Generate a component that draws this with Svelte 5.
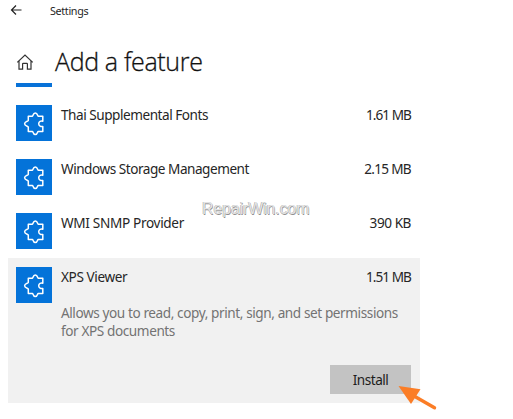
<script>
  const features = [
    { name: 'Thai Supplemental Fonts', size: '1.61 MB', nameSpacing: -0.47, sizeSpacing: -0.95 },
    { name: 'Windows Storage Management', size: '2.15 MB', nameSpacing: -0.48, sizeSpacing: -0.7 },
    { name: 'WMI SNMP Provider', size: '390 KB', nameSpacing: -0.33, sizeSpacing: -0.45 },
    { name: 'XPS Viewer', size: '1.51 MB', nameSpacing: -0.4, sizeSpacing: -0.95, selected: true },
  ];
</script>

<div class="window">
  <header class="titlebar">
    <svg class="back" width="12" height="12" viewBox="0 0 12 12"><path d="M11.5 6H1.5M6 1.5 1.5 6l4.5 4.5" /></svg>
    <span class="title">Settings</span>
  </header>
  <div class="heading">
    <svg class="home" width="18" height="18" viewBox="0 0 18 18"><path d="M1.3 9.4 9 2l7.7 7.4M3 8v8.2h3.6V11Q6.6 10.4 7.2 10.4H10.8Q11.4 10.4 11.4 11V16.2H15V8" /></svg>
    <h1>Add a feature</h1>
  </div>
  <div class="tab"></div>
  <ul>
    {#each features as f}
      <li class:selected={f.selected}>
        <div class="row">
          <div class="tile">
            <svg width="36" height="36" viewBox="0 0 36 36"><path d="M12.3 11.2H16.4C17.2 11.2 16.8 8 19.3 8S21.4 11.2 22.2 11.2H26.8V16.2C25 15.6 22.7 16.5 22.7 18.8S25 22 26.8 21.4V26.4H22.2C21.4 26.4 21.8 29.6 19.3 29.6S17.2 26.4 16.4 26.4H12.3V22.1C12.3 21.2 8.6 21.3 8.6 18.8S12.3 16.4 12.3 15.5Z" /></svg>
          </div>
          <span class="name" style:letter-spacing="{f.nameSpacing}px">{f.name}</span>
          <span class="size" style:letter-spacing="{f.sizeSpacing}px">{f.size}</span>
        </div>
        {#if f.selected}
          <p>Allows you to read, copy, print, sign, and set permissions<br />for XPS documents</p>
          <button>Install</button>
        {/if}
      </li>
    {/each}
  </ul>
  <div class="watermark">RepairWin.com</div>
  <svg class="pointer" width="42" height="28" viewBox="0 0 42 28">
    <path d="M16 11 36.5 22.8" />
    <polygon points="0.5,1 22.5,4.3 13,19" />
  </svg>
</div>

<style>
  .window {
    position: relative;
    box-sizing: border-box;
    width: 513px;
    height: 419px;
    background: #fff;
    color: #262626;
    font-family: 'Noto Sans', 'Open Sans', sans-serif;
    font-size: 13.6px;
    overflow: hidden;
  }
  svg { display: block; }
  path { fill: none; }
  .titlebar {
    display: flex;
    align-items: center;
    height: 22px;
    padding-left: 10px;
  }
  .back { margin-top: -2px; }
  .back path { stroke: #222; stroke-width: 1.2; }
  .title { margin: 0 0 1px 28px; font-size: 10.8px; letter-spacing: -0.35px; }
  .heading {
    display: flex;
    align-items: center;
    height: 61px;
    padding: 17px 0 0 16px;
    box-sizing: border-box;
  }
  .home { margin-top: 1px; }
  .home path { stroke: #333; stroke-width: 1.2; }
  h1 {
    margin: 0 0 0 21px;
    font-family: 'Open Sans', sans-serif;
    font-size: 25px;
    font-weight: 300;
    line-height: 36px;
    letter-spacing: -0.35px;
    color: #111;
    -webkit-text-stroke: 0.3px #111;
  }
  .tab { width: 36px; height: 4px; margin-left: 16px; background: #0872d8; }
  ul { list-style: none; margin: 8.5px 0 0 8px; padding: 0; width: 412px; }
  li { height: 54.2px; }
  li.selected { height: 144.8px; background: #f1f1f1; }
  .row { display: flex; padding: 9px 9px 0 8px; line-height: 19px; }
  .tile {
    width: 36px;
    height: 36px;
    background: #0473d9;
  }
  .tile path { stroke: #fff; stroke-width: 1.5; stroke-linejoin: round; }
  .name { margin-left: 9px; white-space: nowrap; }
  .size { margin-left: auto; }
  p { margin: 1px 0 0 53px; color: #737373; line-height: 18px; letter-spacing: -0.41px; white-space: nowrap; }
  button {
    display: block;
    width: 81px;
    height: 29px;
    margin: 25px 0 0 322px;
    padding: 0;
    border: 0;
    background: #c3c3c3;
    color: #1c1c1c;
    font: inherit;
    letter-spacing: -0.5px;
  }
  .watermark {
    position: absolute;
    left: 202px;
    top: 199px;
    font: 16px/20px 'Liberation Sans', Arial, sans-serif;
    letter-spacing: -0.15px;
    color: #e4e4e4;
    text-shadow: -0.5px -0.5px 0 #a8a8a8, 0.5px 0.5px 0 #909090;
  }
  .pointer { position: absolute; left: 398px; top: 385px; }
  .pointer path { stroke: #fb7d26; stroke-width: 3.4; stroke-linecap: round; }
  .pointer polygon { fill: #fb7d26; }
</style>
